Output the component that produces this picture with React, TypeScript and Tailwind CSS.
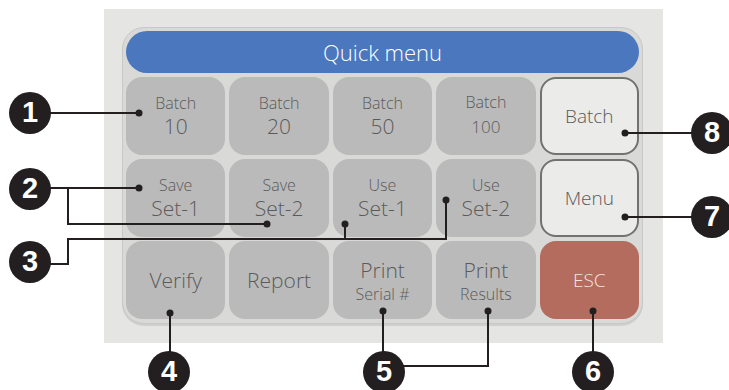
import React from "react";

type Btn = { top: string; bottom?: string; topCls?: string; bottomCls?: string };

const grid: Btn[] = [
  { top: "Batch", bottom: "10" },
  { top: "Batch", bottom: "20" },
  { top: "Batch", bottom: "50" },
  { top: "Batch", bottom: "100", bottomCls: "text-[17px] leading-[26px] mt-[2px]" },
  { top: "Save", bottom: "Set-1" },
  { top: "Save", bottom: "Set-2" },
  { top: "Use", bottom: "Set-1" },
  { top: "Use", bottom: "Set-2" },
  { top: "Verify" },
  { top: "Report" },
  { top: "Print", bottom: "Serial #", topCls: "text-[21px] leading-[27px]", bottomCls: "text-[16px] leading-[20px]" },
  { top: "Print", bottom: "Results", topCls: "text-[21px] leading-[27px]", bottomCls: "text-[16px] leading-[20px]" },
];

const callouts = [
  { n: "1", cls: "left-[9px] top-[92px]" },
  { n: "2", cls: "left-[9px] top-[168px]" },
  { n: "3", cls: "left-[9px] top-[241px]" },
  { n: "4", cls: "left-[148px] top-[351px]" },
  { n: "5", cls: "left-[363px] top-[351px]" },
  { n: "6", cls: "left-[572px] top-[351px]" },
  { n: "7", cls: "left-[691px] top-[196px]" },
  { n: "8", cls: "left-[691px] top-[112px]" },
];

const dots: [number, number][] = [
  [139, 113], [139, 188], [267, 224], [345, 224], [446, 200],
  [170, 313], [383, 311], [488, 311], [593, 311], [625, 217], [625, 133],
];

function GridButton({ b }: { b: Btn }) {
  return (
    <div className="rounded-[16px] bg-[#bababa] flex flex-col items-center justify-center text-[#5a5a5a]">
      {!b.bottom ? (
        <span className="text-[21px] leading-[27px]">{b.top}</span>
      ) : (
        <>
          <span className={b.topCls ?? "text-[16px] leading-[20px]"}>{b.top}</span>
          <span className={b.bottomCls ?? "text-[21px] leading-[26px]"}>{b.bottom}</span>
        </>
      )}
    </div>
  );
}

export default function App() {
  const cells: React.ReactNode[] = [];
  grid.forEach((b, i) => {
    cells.push(<GridButton key={i} b={b} />);
    if (i === 3)
      cells.push(
        <div key="batch" className="rounded-[16px] bg-[#ebebea] border-2 border-[#727272] flex items-center justify-center text-[19px] text-[#5a5a5a]">
          Batch
        </div>
      );
    if (i === 7)
      cells.push(
        <div key="menu" className="rounded-[16px] bg-[#ebebea] border-2 border-[#727272] flex items-center justify-center text-[19px] text-[#5a5a5a]">
          Menu
        </div>
      );
    if (i === 11)
      cells.push(
        <div key="esc" className="rounded-[16px] bg-[#b36c5d] flex items-center justify-center text-[19px] text-[#f5e6e1]">
          ESC
        </div>
      );
  });

  return (
    <div className="relative w-[729px] h-[390px] bg-white overflow-hidden font-['Open_Sans',sans-serif] font-light">
      <div className="ml-[104px] mt-[9px] w-[559px] h-[334px] bg-[#e5e5e4] pt-[18px] pl-[18px]">
        <div className="w-[521px] h-[297px] rounded-[22px] bg-[#d9d9d8] border border-[#c8c8c7] shadow-[0_2px_0_#cfcfce] px-[3px] pt-[3px]">
          <div className="h-[42px] rounded-full bg-[#4a77bd] flex items-center justify-center text-white text-[22px]">
            Quick menu
          </div>
          <div className="mt-[4px] grid grid-cols-5 grid-rows-[78px_78px_78px] gap-[4px]">{cells}</div>
        </div>
      </div>

      <svg className="absolute left-0 top-0" width="729" height="390" fill="none" stroke="#231f20" strokeWidth="2">
        <path d="M30 113 H139" />
        <path d="M30 188 H139 M68 188 V224 H267" />
        <path d="M30 264 H68 V239 H446 V200 M345 239 V224" />
        <path d="M170 313 V372" />
        <path d="M383 311 V372 M488 311 V366 H384" />
        <path d="M593 311 V372" />
        <path d="M625 217 H712 M625 133 H712" />
        {dots.map(([x, y], k) => (
          <circle key={k} cx={x} cy={y} r="3.5" fill="#231f20" stroke="none" />
        ))}
      </svg>

      {callouts.map((c) => (
        <div
          key={c.n}
          className={`absolute ${c.cls} w-[42px] h-[42px] rounded-full bg-[#231f20] flex items-center justify-center text-white text-[29px] font-bold font-['Liberation_Sans',sans-serif]`}
        >
          {c.n}
        </div>
      ))}
    </div>
  );
}
